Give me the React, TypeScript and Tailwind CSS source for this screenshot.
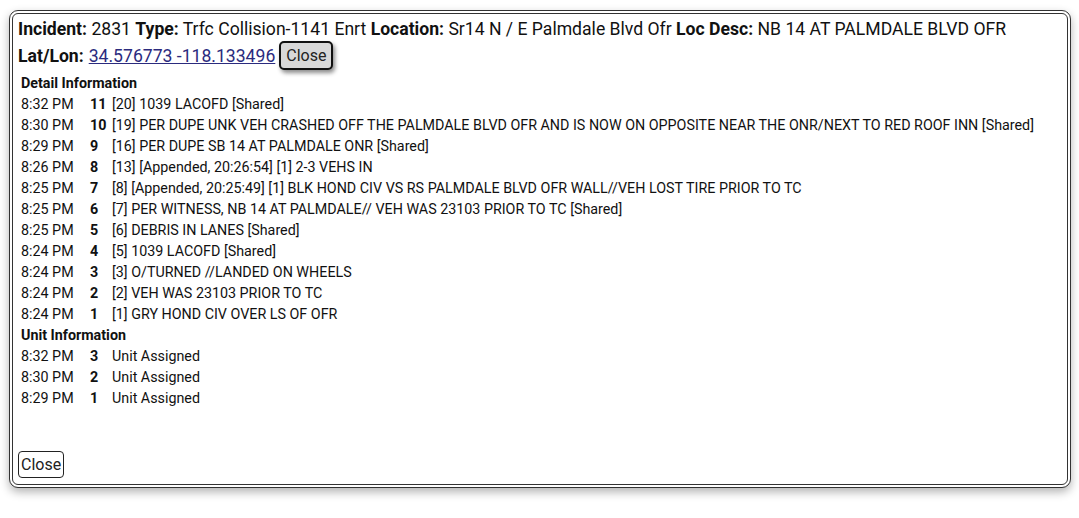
import React from "react";

type Row = { time: string; n: string; text: string };

const details: Row[] = [
  { time: "8:32 PM", n: "11", text: "[20] 1039 LACOFD [Shared]" },
  { time: "8:30 PM", n: "10", text: "[19] PER DUPE UNK VEH CRASHED OFF THE PALMDALE BLVD OFR AND IS NOW ON OPPOSITE NEAR THE ONR/NEXT TO RED ROOF INN [Shared]" },
  { time: "8:29 PM", n: "9", text: "[16] PER DUPE SB 14 AT PALMDALE ONR [Shared]" },
  { time: "8:26 PM", n: "8", text: "[13] [Appended, 20:26:54] [1] 2-3 VEHS IN" },
  { time: "8:25 PM", n: "7", text: "[8] [Appended, 20:25:49] [1] BLK HOND CIV VS RS PALMDALE BLVD OFR WALL//VEH LOST TIRE PRIOR TO TC" },
  { time: "8:25 PM", n: "6", text: "[7] PER WITNESS, NB 14 AT PALMDALE// VEH WAS 23103 PRIOR TO TC [Shared]" },
  { time: "8:25 PM", n: "5", text: "[6] DEBRIS IN LANES [Shared]" },
  { time: "8:24 PM", n: "4", text: "[5] 1039 LACOFD [Shared]" },
  { time: "8:24 PM", n: "3", text: "[3] O/TURNED //LANDED ON WHEELS" },
  { time: "8:24 PM", n: "2", text: "[2] VEH WAS 23103 PRIOR TO TC" },
  { time: "8:24 PM", n: "1", text: "[1] GRY HOND CIV OVER LS OF OFR" },
];

const units: Row[] = [
  { time: "8:32 PM", n: "3", text: "Unit Assigned" },
  { time: "8:30 PM", n: "2", text: "Unit Assigned" },
  { time: "8:29 PM", n: "1", text: "Unit Assigned" },
];

function LogRows({ rows }: { rows: Row[] }) {
  return (
    <>
      {rows.map((r, i) => (
        <div key={i} className="flex h-[21px] items-center whitespace-nowrap">
          <span className="w-[69px] shrink-0">{r.time}</span>
          <span className="w-[22px] shrink-0 font-bold">{r.n}</span>
          <span>{r.text}</span>
        </div>
      ))}
    </>
  );
}

export default function App() {
  return (
    <div
      className="h-[518px] w-[1079px] overflow-hidden bg-white pl-[9px] pt-[10px] text-[#111]"
      style={{ fontFamily: "Roboto, 'Noto Sans', sans-serif" }}
    >
      <div className="flex h-[478px] w-[1062px] flex-col rounded-[9px] border-4 border-double border-[#333] bg-white shadow-[0_4px_10px_rgba(0,0,0,0.3)]">
        {/* incident header */}
        <div className="px-[5px] pt-[3px] text-[17.6px] leading-[24px]">
          <div className="whitespace-nowrap">
            <b>Incident:</b> 2831 <b>Type:</b> Trfc Collision-1141 Enrt <b>Location:</b> Sr14 N / E Palmdale Blvd Ofr{" "}
            <b>Loc Desc:</b> NB 14 AT PALMDALE BLVD OFR
          </div>
          <div className="flex items-center whitespace-nowrap">
            <b>Lat/Lon:</b>
            <a href="#" className="ml-[5px] text-[#2b2b7e] underline">
              34.576773 -118.133496
            </a>
            <button className="ml-[4px] h-[29px] rounded-[5px] border-2 border-[#111] bg-[#d8d8d8] px-[5px] text-[16px] leading-none text-[#222] shadow-[2px_3px_4px_rgba(0,0,0,0.45)]">
              Close
            </button>
          </div>
        </div>

        {/* detail & unit logs */}
        <div className="mt-[3px] pl-[8px] text-[14.3px] leading-[21px]">
          <div className="font-bold">Detail Information</div>
          <LogRows rows={details} />
          <div className="font-bold">Unit Information</div>
          <LogRows rows={units} />
        </div>

        <div className="mt-auto pb-[6px] pl-[5px]">
          <button className="h-[27px] rounded-[4px] border border-[#222] bg-white px-[2px] text-[16px] leading-none text-[#222]">
            Close
          </button>
        </div>
      </div>
    </div>
  );
}
